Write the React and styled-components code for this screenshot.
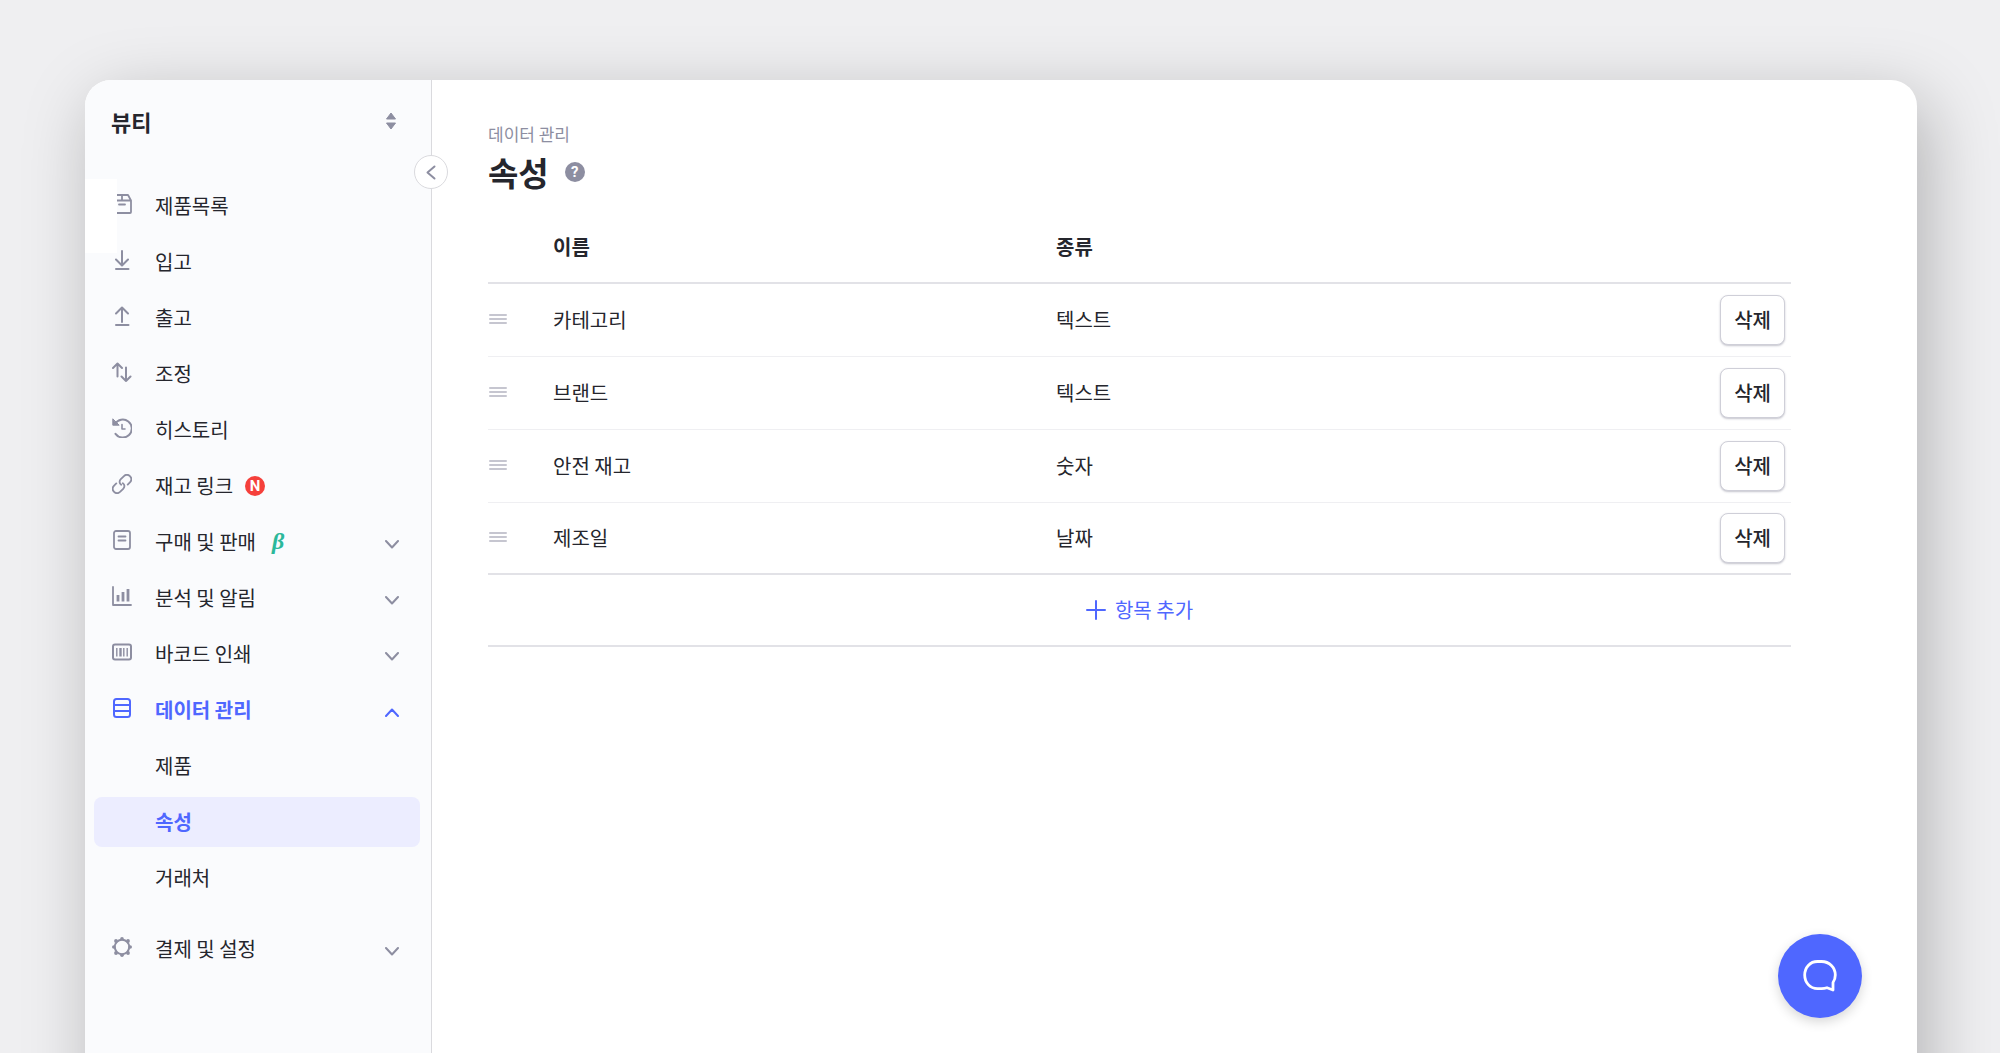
import React from "react";
import styled, { createGlobalStyle } from "styled-components";

const color = {
  page: "#efeff1",
  panel: "#ffffff",
  side: "#fafbfd",
  ink: "#25262d",
  muted: "#8d8ea1",
  line: "#e2e2e7",
  soft: "#efeff2",
  blue: "#4f67ff",
  tint: "#ecedff",
};

const GlobalStyle = createGlobalStyle`
  *, *::before, *::after { box-sizing: border-box; }
  body {
    margin: 0;
    background: ${color.page};
    color: ${color.ink};
    font: 400 20px/28px "Noto Sans CJK KR", "Noto Sans", sans-serif;
  }
  button { font: inherit; color: inherit; cursor: pointer; }
`;

const Page = styled.div`
  height: 100vh;
  overflow: hidden;
  padding: 80px 83px 0 85px;
`;

const Panel = styled.div`
  display: flex;
  height: 100vh;
  border-radius: 26px;
  background: ${color.panel};
  box-shadow: 10px 20px 70px rgba(0, 0, 0, 0.26);
`;

const Sidebar = styled.aside`
  position: relative;
  flex: 0 0 347px;
  border-right: 1px solid #dadade;
  border-radius: 26px 0 0 26px;
  background: ${color.side};
`;

const TeamButton = styled.button`
  display: flex;
  align-items: center;
  justify-content: space-between;
  width: 100%;
  height: 82px;
  padding: 0 34px 0 26px;
  border: 0;
  background: none;
  font-size: 22px;
  font-weight: 700;
`;

const CollapseButton = styled.button`
  position: absolute;
  top: 75px;
  right: -17px;
  display: grid;
  place-items: center;
  width: 34px;
  height: 34px;
  padding: 0;
  border: 1px solid #dadade;
  border-radius: 50%;
  background: ${color.panel};
`;

const Notch = styled.div`
  position: absolute;
  top: 99px;
  left: 0;
  width: 32px;
  height: 74px;
  background: ${color.panel};
`;

const Menu = styled.ul`
  display: flex;
  flex-direction: column;
  gap: 6px;
  margin: 0;
  padding: ${(p) => (p.$nested ? "6px 0 15px" : "19px 11px 0 9px")};
  list-style: none;
`;

const Entry = styled.a`
  display: flex;
  align-items: center;
  width: 100%;
  height: 50px;
  padding: 0 21px 0 ${(p) => (p.$nested ? "61px" : "17px")};
  border: 0;
  border-radius: 8px;
  background: ${(p) => (p.$current ? color.tint : "none")};
  color: ${(p) => (p.$active ? color.blue : color.ink)};
  font-weight: ${(p) => (p.$active ? 700 : 400)};
  text-align: left;
  text-decoration: none;
`;

const EntryIcon = styled.span`
  display: flex;
  width: 44px;
  padding: 0 0 4px 1px;
  color: ${(p) => (p.$active ? color.blue : color.muted)};
`;

const Arrow = styled.span`
  display: flex;
  margin-left: auto;
  padding-top: 4px;
  color: ${(p) => (p.$active ? color.blue : color.muted)};
`;

const NewBadge = styled.span`
  display: grid;
  place-items: center;
  width: 20px;
  height: 20px;
  margin-left: 12px;
  border-radius: 50%;
  background: #f5403b;
  color: #fff;
  font: 700 15px/20px Roboto, sans-serif;
`;

const BetaBadge = styled.span`
  margin-left: 16px;
  padding-bottom: 2px;
  color: #2bb89a;
  font: italic 700 24px/24px "Liberation Serif", serif;
`;

const Main = styled.main`
  flex: 1;
  min-width: 0;
  padding: 42px 126px 0 56px;
`;

const Crumb = styled.div`
  color: ${color.muted};
  font-size: 17px;
  line-height: 24px;
`;

const TitleRow = styled.div`
  display: flex;
  align-items: center;
  gap: 16px;
  margin-bottom: 13px;
`;

const Title = styled.h1`
  margin: 0;
  font-size: 33px;
  font-weight: 700;
  line-height: 52px;
`;

const HelpButton = styled.button`
  display: grid;
  place-items: center;
  width: 20px;
  height: 20px;
  padding: 0;
  border: 0;
  border-radius: 50%;
  background: ${color.muted};
  color: #fff;
  font: 700 15px/20px Roboto, sans-serif;
`;

const Table = styled.table`
  width: 100%;
  border-collapse: separate;
  border-spacing: 0;
  table-layout: fixed;
`;

const Col = styled.col`
  width: ${(p) => p.$width};
`;

const HeadCell = styled.th`
  height: 73px;
  padding: 0;
  border-bottom: 2px solid ${color.line};
  font-weight: 700;
  text-align: left;
`;

const Cell = styled.td`
  height: ${(p) => (p.$last ? "72px" : "73px")};
  padding: 0 ${(p) => (p.$end ? "6px" : "0")} 0 0;
  border-bottom: ${(p) => (p.$last ? `2px solid ${color.line}` : `1px solid ${color.soft}`)};
  text-align: ${(p) => (p.$end ? "right" : "left")};
`;

const HandleButton = styled.button`
  display: flex;
  padding: 0 0 2px;
  border: 0;
  background: none;
  color: #c6c6d0;
`;

const DeleteButton = styled.button`
  height: 50px;
  padding: 0 13px;
  border: 1px solid #cfcfd8;
  border-radius: 8px;
  background: #fff;
  box-shadow: 0 1px 2px rgba(60, 60, 90, 0.3);
  font-weight: 500;
`;

const AddCell = styled.td`
  height: 72px;
  padding: 0;
  border-bottom: 2px solid ${color.line};
`;

const AddButton = styled.button`
  display: flex;
  align-items: center;
  justify-content: center;
  gap: 9px;
  width: 100%;
  padding: 0;
  border: 0;
  background: none;
  color: ${color.blue};
`;

const ChatButton = styled.button`
  position: fixed;
  right: 138px;
  bottom: 35px;
  display: grid;
  place-items: center;
  width: 84px;
  height: 84px;
  padding: 0;
  border: 0;
  border-radius: 50%;
  background: ${color.blue};
  color: #fff;
  box-shadow: 0 4px 12px rgba(0, 0, 0, 0.16);
`;

const Svg = ({ w = 20, h = 20, sw = 2, children }) => (
  <svg width={w} height={h} viewBox={`0 0 ${w} ${h}`} fill="none" stroke="currentColor"
    strokeWidth={sw} strokeLinecap="round" strokeLinejoin="round" aria-hidden="true">
    {children}
  </svg>
);

const icons = {
  product: <Svg sw={1.8}><path d="M4 1h12l3 5.5V18q0 1-1 1H2q-1 0-1-1V6.500zM1 6.500h18M10 1v5.500M7 10.500h6" /></Svg>,
  inbound: <Svg><path d="M10 1v14M4 9.500l6 6 6-6M4 19h12.500" /></Svg>,
  outbound: <Svg><path d="M10 16V1.500M4 7.500l6-6 6 6M4 19h12.500" /></Svg>,
  adjust: <Svg><path d="M5.500 14.500V1.500M1 6l4.500-4.500L10 6M14 5.500v13.500M9.500 14.500L14 19l4.500-4.500" /></Svg>,
  history: (
    <Svg>
      <path d="M3 6A9 9 0 1 1 3.500 15.800" />
      <path d="M.8 1.200v6h6z" fill="currentColor" strokeWidth="1" />
      <path d="M10 6.500V11h3" strokeWidth="1.600" />
    </Svg>
  ),
  link: (
    <Svg sw={1.8}>
      <path d="M9.200 10.800c-2-1.300-2.200-3.800-.4-5.600l2.900-2.900c1.900-1.800 4.500-1.800 6.200-.1s1.800 4.300 0 6.200l-2.200 2.200" />
      <path d="M10.800 9.200c2 1.300 2.200 3.800.4 5.600l-2.900 2.900c-1.900 1.800-4.500 1.800-6.200.1s-1.800-4.300 0-6.200l2.200-2.200" />
    </Svg>
  ),
  order: <Svg sw={1.8}><rect x="2" y="1" width="16" height="18" rx="2" /><path d="M6.500 6.500h7M6.500 10.500h7" /></Svg>,
  chart: <Svg sw={1.8}><path d="M1 1v18h18" /><path d="M6 9v6.500M11 6v9.500M16 3v12.500" strokeWidth="2.800" strokeLinecap="butt" /></Svg>,
  barcode: (
    <Svg>
      <rect x="1" y="2.500" width="18" height="15" rx="2" />
      <path d="M4.800 6v8.500M11.800 6v8.500M15.200 6v8.500" strokeWidth="1.400" strokeLinecap="butt" />
      <path d="M8.500 6v8.500" strokeWidth="2.400" strokeLinecap="butt" />
    </Svg>
  ),
  data: <Svg><rect x="2" y="1" width="16" height="18" rx="2.500" /><path d="M2 7h16M2 13h16" /></Svg>,
  gear: (
    <Svg>
      <circle cx="10" cy="10" r="7.200" />
      <g fill="currentColor" stroke="none">
        <circle cx="10" cy="1.800" r="1.800" /><circle cx="10" cy="18.200" r="1.800" />
        <circle cx="1.800" cy="10" r="1.800" /><circle cx="18.200" cy="10" r="1.800" />
        <circle cx="4" cy="4" r="1.900" /><circle cx="16" cy="4" r="1.900" />
        <circle cx="4" cy="16" r="1.900" /><circle cx="16" cy="16" r="1.900" />
      </g>
    </Svg>
  ),
};

const menu = [
  { icon: "product", label: "제품목록" },
  { icon: "inbound", label: "입고" },
  { icon: "outbound", label: "출고" },
  { icon: "adjust", label: "조정" },
  { icon: "history", label: "히스토리" },
  { icon: "link", label: "재고 링크", badge: <NewBadge>N</NewBadge> },
  { icon: "order", label: "구매 및 판매", badge: <BetaBadge>β</BetaBadge>, group: true },
  { icon: "chart", label: "분석 및 알림", group: true },
  { icon: "barcode", label: "바코드 인쇄", group: true },
  { icon: "data", label: "데이터 관리", group: true, children: ["제품", "속성", "거래처"] },
  { icon: "gear", label: "결제 및 설정", group: true },
];

const attributes = [
  ["카테고리", "텍스트"],
  ["브랜드", "텍스트"],
  ["안전 재고", "숫자"],
  ["제조일", "날짜"],
];

function MenuItem({ icon, label, badge, group, children }) {
  const open = Boolean(children);
  const target = group ? { as: "button", type: "button", "aria-expanded": open } : { href: "#" };
  return (
    <li>
      <Entry {...target} $active={open}>
        <EntryIcon $active={open}>{icons[icon]}</EntryIcon>
        {label}
        {badge}
        {group && (
          <Arrow $active={open}>
            <Svg w={14} h={9}><path d={open ? "M1 8l6-6.500L13 8" : "M1 1l6 6.500L13 1"} /></Svg>
          </Arrow>
        )}
      </Entry>
      {open && (
        <Menu $nested>
          {children.map((name) => (
            <li key={name}>
              <Entry href="#" $nested $active={name === "속성"} $current={name === "속성"}>{name}</Entry>
            </li>
          ))}
        </Menu>
      )}
    </li>
  );
}

export default function App() {
  return (
    <Page>
      <GlobalStyle />
      <Panel>
        <Sidebar>
          <TeamButton type="button">
            뷰티
            <svg width="12" height="18" viewBox="0 0 12 18" fill={color.muted} stroke={color.muted}
              strokeLinejoin="round" aria-hidden="true">
              <path d="M6 1l4.500 6h-9zM6 17l4.500-6h-9z" />
            </svg>
          </TeamButton>
          <nav>
            <Menu>
              {menu.map((item) => <MenuItem key={item.label} {...item} />)}
            </Menu>
          </nav>
          <Notch />
          <CollapseButton type="button" aria-label="메뉴 접기">
            <svg width="10" height="15" viewBox="0 0 10 15" fill="none" stroke={color.muted}
              strokeWidth="2" strokeLinecap="round" strokeLinejoin="round" aria-hidden="true">
              <path d="M8.500 1.500l-7 6 7 6" />
            </svg>
          </CollapseButton>
        </Sidebar>
        <Main>
          <Crumb>데이터 관리</Crumb>
          <TitleRow>
            <Title>속성</Title>
            <HelpButton type="button">?</HelpButton>
          </TitleRow>
          <Table>
            <colgroup>
              <Col $width="65px" />
              <Col $width="503px" />
              <Col />
              <Col $width="120px" />
            </colgroup>
            <thead>
              <tr>
                <HeadCell />
                <HeadCell scope="col">이름</HeadCell>
                <HeadCell scope="col">종류</HeadCell>
                <HeadCell />
              </tr>
            </thead>
            <tbody>
              {attributes.map(([name, kind], i) => {
                const last = i === attributes.length - 1;
                return (
                  <tr key={name}>
                    <Cell $last={last}>
                      <HandleButton type="button" aria-label={`${name} 순서 변경`}>
                        <Svg w={20} h={12}><path d="M2 2h16M2 6h16M2 10h16" /></Svg>
                      </HandleButton>
                    </Cell>
                    <Cell $last={last}>{name}</Cell>
                    <Cell $last={last}>{kind}</Cell>
                    <Cell $last={last} $end><DeleteButton type="button">삭제</DeleteButton></Cell>
                  </tr>
                );
              })}
            </tbody>
            <tfoot>
              <tr>
                <AddCell colSpan={4}>
                  <AddButton type="button">
                    <Svg><path d="M10 1v18M1 10h18" /></Svg>
                    항목 추가
                  </AddButton>
                </AddCell>
              </tr>
            </tfoot>
          </Table>
        </Main>
      </Panel>
      <ChatButton type="button" aria-label="상담하기">
        <svg width="34" height="32" viewBox="0 0 34 32" fill="none" stroke="currentColor"
          strokeWidth="2.800" strokeLinejoin="round" aria-hidden="true">
          <path d="M14.500 1.500h4C26.500 1.500 32.300 7.500 32.300 15c0 3-.8 5.400-2.300 7.500V30l-6-2.300q-2.500.9-5.500.9h-4C7 28.600 1.700 22.500 1.700 15S7 1.500 14.500 1.500z" />
        </svg>
      </ChatButton>
    </Page>
  );
}
